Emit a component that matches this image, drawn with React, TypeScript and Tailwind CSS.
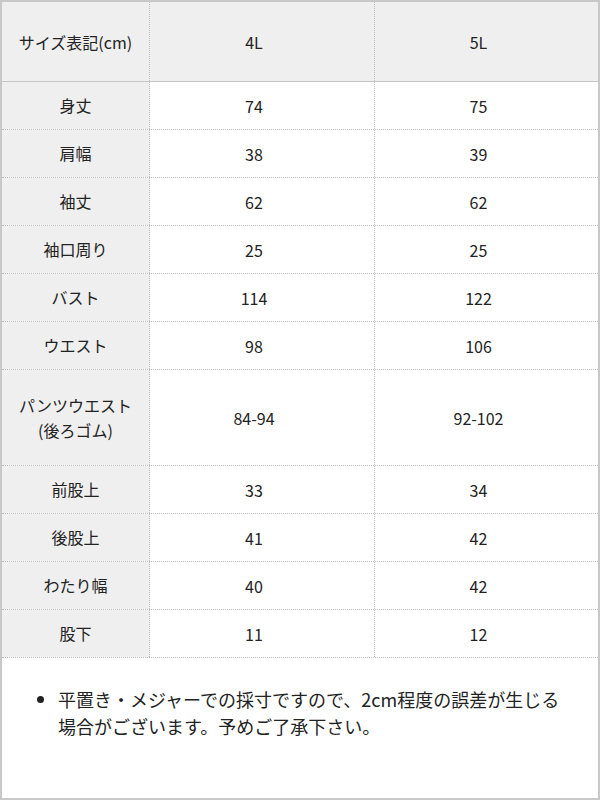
const rows: { label: string[]; a: string; b: string; tall?: boolean }[] = [
  { label: ["身丈"], a: "74", b: "75" },
  { label: ["肩幅"], a: "38", b: "39" },
  { label: ["袖丈"], a: "62", b: "62" },
  { label: ["袖口周り"], a: "25", b: "25" },
  { label: ["バスト"], a: "114", b: "122" },
  { label: ["ウエスト"], a: "98", b: "106" },
  { label: ["パンツウエスト", "(後ろゴム)"], a: "84-94", b: "92-102", tall: true },
  { label: ["前股上"], a: "33", b: "34" },
  { label: ["後股上"], a: "41", b: "42" },
  { label: ["わたり幅"], a: "40", b: "42" },
  { label: ["股下"], a: "11", b: "12" },
];

export default function App() {
  return (
    <div
      className="w-[600px] h-[800px] bg-white border-2 border-[#c8c8c8] flex flex-col text-[#222] text-[16px]"
      style={{ fontFamily: '"Noto Sans CJK JP", "Noto Sans", sans-serif' }}
    >
      {/* header */}
      <div className="flex h-[80px] bg-[#efefef] border-b border-[#c4c4c4]">
        <div className="w-[148px] flex items-center justify-center border-r border-dotted border-[#bdbdbd]">
          サイズ表記(cm)
        </div>
        <div className="w-[225px] flex items-center justify-center pr-[16px] border-r border-dotted border-[#bdbdbd]">
          4L
        </div>
        <div className="flex-1 flex items-center justify-center pr-[16px]">5L</div>
      </div>

      {rows.map((r) => (
        <div
          key={r.label.join("")}
          className={`flex border-b border-dotted border-[#bdbdbd] ${r.tall ? "h-[96px]" : "h-[48px]"}`}
        >
          <div className="w-[148px] bg-[#efefef] flex flex-col items-center justify-center leading-[25px] border-r border-dotted border-[#bdbdbd]">
            {r.label.map((l) => (
              <span key={l}>{l}</span>
            ))}
          </div>
          <div className="w-[225px] flex items-center justify-center pr-[16px] border-r border-dotted border-[#bdbdbd]">
            {r.a}
          </div>
          <div className="flex-1 flex items-center justify-center pr-[16px]">{r.b}</div>
        </div>
      ))}

      {/* note */}
      <div className="flex-1 pt-[28px] pl-[38px] pr-[33px]">
        <ul className="list-disc pl-[18px] text-[18px] leading-[27px]">
          <li>
            平置き・メジャーでの採寸ですので、2cm程度の誤差が生じる場合がございます。予めご了承下さい。
          </li>
        </ul>
      </div>
    </div>
  );
}
